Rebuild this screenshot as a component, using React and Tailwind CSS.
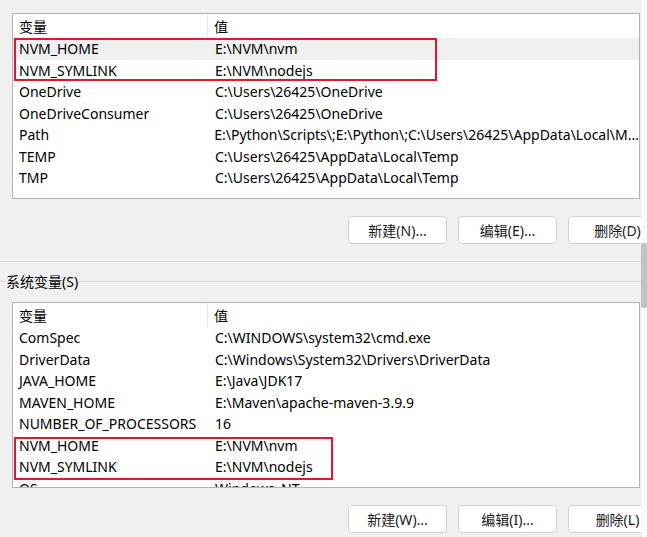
import React from "react";

const userVars = [
  ["NVM_HOME", "E:\\NVM\\nvm"],
  ["NVM_SYMLINK", "E:\\NVM\\nodejs"],
  ["OneDrive", "C:\\Users\\26425\\OneDrive"],
  ["OneDriveConsumer", "C:\\Users\\26425\\OneDrive"],
  ["Path", "E:\\Python\\Scripts\\;E:\\Python\\;C:\\Users\\26425\\AppData\\Local\\M..."],
  ["TEMP", "C:\\Users\\26425\\AppData\\Local\\Temp"],
  ["TMP", "C:\\Users\\26425\\AppData\\Local\\Temp"],
];

const sysVars = [
  ["ComSpec", "C:\\WINDOWS\\system32\\cmd.exe"],
  ["DriverData", "C:\\Windows\\System32\\Drivers\\DriverData"],
  ["JAVA_HOME", "E:\\Java\\JDK17"],
  ["MAVEN_HOME", "E:\\Maven\\apache-maven-3.9.9"],
  ["NUMBER_OF_PROCESSORS", "16"],
  ["NVM_HOME", "E:\\NVM\\nvm"],
  ["NVM_SYMLINK", "E:\\NVM\\nodejs"],
  ["OS", "Windows_NT"],
];

function VarList({ rows, selected, mark }) {
  return (
    <div className="relative w-[628px] h-[186px] bg-white border border-[#b4b4b4] overflow-hidden">
      {/* header */}
      <div className="flex h-[24px] items-center">
        <div className="w-[195px] pl-[6px] border-r border-[#e5e5e5] h-full flex items-center">变量</div>
        <div className="pl-[6px]">值</div>
      </div>
      {rows.map(([name, value], i) => (
        <div
          key={name}
          className={
            "flex h-[21.5px] items-center whitespace-nowrap " +
            (i === selected ? "bg-[#f0f0f0]" : "")
          }
        >
          <div className="w-[196px] pl-[6px]">{name}</div>
          <div className="pl-[6px]">{value}</div>
        </div>
      ))}
      {/* red annotation box */}
      <div
        className="absolute border-2 border-[#e0182d] pointer-events-none"
        style={{ left: mark.x, top: mark.y, width: mark.w, height: mark.h }}
      />
    </div>
  );
}

function Buttons({ labels }) {
  return (
    <div className="flex gap-[11px] pl-[348px] whitespace-nowrap">
      {labels.map((l) => (
        <button
          key={l}
          className="shrink-0 w-[99px] h-[28px] bg-white border border-[#d3d3d3] rounded-[4px] text-[14px] text-[#1a1a1a] flex items-center justify-center"
        >
          {l}
        </button>
      ))}
    </div>
  );
}

export default function App() {
  return (
    <div
      className="flex w-[647px] h-[537px] bg-[#f0f0f0] text-[14px] text-black overflow-hidden"
      style={{ fontFamily: '"Noto Sans", "Noto Sans CJK SC", sans-serif' }}
    >
      <div className="w-[641px] shrink-0 overflow-hidden">
        <div className="pl-[12px] pt-[13px]">
          <VarList rows={userVars} selected={0} mark={{ x: 1, y: 24, w: 423, h: 43 }} />
        </div>
        <div className="mt-[17px]">
          <Buttons labels={["新建(N)...", "编辑(E)...", "删除(D)"]} />
        </div>
        <div className="mt-[17px] border-t border-[#dadada]" />
        <div className="relative h-[40px]">
          <div className="absolute left-0 right-0 top-[19px] border-t border-[#dadada]" />
          <div className="absolute left-[5px] top-[10px] px-[1px] bg-[#f0f0f0] leading-[20px]">系统变量(S)</div>
        </div>
        <div className="pl-[12px]">
          <VarList rows={sysVars} selected={-1} mark={{ x: 1, y: 134, w: 319, h: 43 }} />
        </div>
        <div className="mt-[17px]">
          <Buttons labels={["新建(W)...", "编辑(I)...", "删除(L)"]} />
        </div>
      </div>
      {/* outer scrollbar */}
      <div className="w-[6px] bg-[#f9f9f9] flex flex-col">
        <div className="h-[243px]" />
        <div className="h-[65px] bg-[#c2c2c2] rounded-[2px]" />
      </div>
    </div>
  );
}
